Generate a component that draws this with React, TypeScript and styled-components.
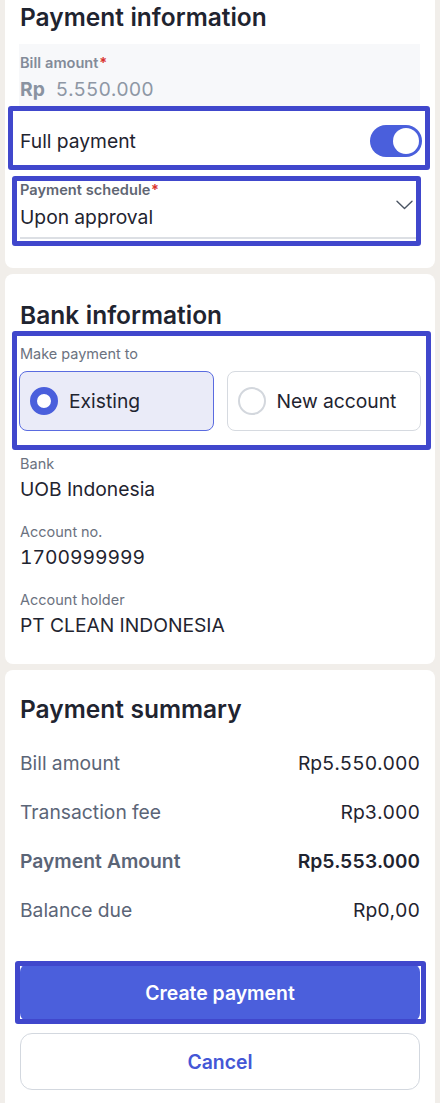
import React from "react";
import styled, { createGlobalStyle } from "styled-components";

const GlobalStyle = createGlobalStyle`
  html, body {
    margin: 0;
    padding: 0;
    background: #f1eeea;
  }
  body {
    font-family: Inter, "Noto Sans", "Liberation Sans", sans-serif;
    font-feature-settings: "tnum" 1;
    color: #1f2430;
    -webkit-font-smoothing: antialiased;
  }
  * { box-sizing: border-box; }
`;

const Page = styled.div`
  display: flex;
  flex-direction: column;
  gap: 6px;
  padding: 0 5px;
  width: 440px;
  height: 1103px;
  overflow: hidden;
`;

const Card = styled.section<{ $pt: number; $pb: number; $first?: boolean }>`
  background: #ffffff;
  border-radius: ${(p) => (p.$first ? "0 0 8px 8px" : "8px")};
  padding: ${(p) => `${p.$pt}px 15px ${p.$pb}px`};
  display: flex;
  flex-direction: column;
  flex-shrink: 0;
`;

const Title = styled.h2`
  margin: 0;
  font-size: 24.5px;
  line-height: 28px;
  font-weight: 600;
  color: #1f2430;
  white-space: nowrap;
`;

const Annotated = styled.div`
  position: relative;
`;

const Mark = styled.div<{ $t: number; $r: number; $b: number; $l: number }>`
  position: absolute;
  top: ${(p) => p.$t}px;
  right: ${(p) => p.$r}px;
  bottom: ${(p) => p.$b}px;
  left: ${(p) => p.$l}px;
  border: 5px solid #4047cc;
  border-radius: 3px;
  pointer-events: none;
  z-index: 2;
`;

const ReadonlyField = styled.div`
  margin-top: 13px;
  margin-left: -1px;
  background: #f7f8fa;
  padding: 11px 0 0 1px;
  display: flex;
  flex-direction: column;
  gap: 5px;
  height: 64px;
`;

const FieldLabel = styled.div<{ $muted?: boolean }>`
  font-size: 14.6px;
  line-height: 16px;
  font-weight: 600;
  color: ${(p) => (p.$muted ? "#838b99" : "#5f6673")};
`;

const Req = styled.span`
  color: #d9302c;
`;

const AmountLine = styled.div`
  display: flex;
  align-items: baseline;
  gap: 11px;
  font-size: 19.3px;
  line-height: 26px;
  color: #8e97a5;
`;

const Currency = styled.span`
  font-weight: 700;
  color: #8a93a1;
`;

const ToggleRow = styled.div`
  height: 62px;
  display: flex;
  align-items: center;
  justify-content: space-between;
  padding-top: 4px;
`;

const BodyText = styled.span`
  font-size: 19.3px;
  line-height: 24px;
  color: #1f2430;
  white-space: nowrap;
`;

const Switch = styled.div<{ $on: boolean }>`
  width: 52px;
  height: 32px;
  border-radius: 16px;
  background: ${(p) => (p.$on ? "#4a5fdc" : "#d1d5db")};
  display: flex;
  align-items: center;
  justify-content: ${(p) => (p.$on ? "flex-end" : "flex-start")};
  padding: 0 3px;
  margin-right: -2px;
`;

const Knob = styled.div`
  width: 26px;
  height: 26px;
  border-radius: 50%;
  background: #ffffff;
`;

const SelectField = styled.div`
  margin-top: 12px;
  display: flex;
  align-items: flex-start;
  justify-content: space-between;
  border-bottom: 2px solid #dcdfe4;
  padding-bottom: 8px;
`;

const SelectText = styled.div`
  display: flex;
  flex-direction: column;
  gap: 7px;
`;

const Chevron = styled.svg`
  margin-top: 18px;
  margin-right: 7px;
  flex-shrink: 0;
`;

const SubLabel = styled.div`
  font-size: 14.5px;
  line-height: 20px;
  color: #6b7280;
`;

const RadioBlock = styled.div`
  margin-top: 15px;
  display: flex;
  flex-direction: column;
  gap: 7px;
`;

const RadioGroup = styled.div`
  display: grid;
  grid-template-columns: 1fr 1fr;
  gap: 13px;
  margin: 0 -1px;
`;

const RadioCard = styled.div<{ $selected: boolean }>`
  height: 60px;
  border-radius: 8px;
  border: 1px solid ${(p) => (p.$selected ? "#5a6be0" : "#d6dae0")};
  background: ${(p) => (p.$selected ? "#eaebf8" : "#ffffff")};
  display: flex;
  align-items: center;
  gap: 11px;
  padding-left: 10px;
`;

const RadioDot = styled.div<{ $selected: boolean }>`
  width: 28px;
  height: 28px;
  border-radius: 50%;
  background: #ffffff;
  border: ${(p) => (p.$selected ? "7px solid #4a5fdc" : "2px solid #d3d7dd")};
  flex-shrink: 0;
`;

const InfoList = styled.div`
  margin-top: 23px;
  display: flex;
  flex-direction: column;
  gap: 21px;
`;

const InfoItem = styled.div`
  display: flex;
  flex-direction: column;
  gap: 3px;
`;

const SummaryList = styled.div`
  margin-top: 28px;
  display: flex;
  flex-direction: column;
  gap: 25px;
`;

const SummaryRow = styled.div<{ $strong?: boolean }>`
  display: flex;
  justify-content: space-between;
  font-size: 19.3px;
  line-height: 24px;
  font-weight: ${(p) => (p.$strong ? 600 : 400)};
`;

const SummaryLabel = styled.span`
  color: #5b6577;
`;

const SummaryValue = styled.span`
  color: #1f2430;
`;

const Actions = styled.div`
  margin-top: 42px;
  display: flex;
  flex-direction: column;
  gap: 12px;
`;

const Button = styled.button<{ $primary?: boolean }>`
  width: 100%;
  height: 57px;
  border-radius: ${(p) => (p.$primary ? "8px" : "12px")};
  border: ${(p) => (p.$primary ? "none" : "1px solid #d3d8df")};
  background: ${(p) => (p.$primary ? "#4b5fdc" : "#ffffff")};
  color: ${(p) => (p.$primary ? "#ffffff" : "#4457d6")};
  font-family: inherit;
  font-size: 19.4px;
  font-weight: 600;
  display: flex;
  align-items: center;
  justify-content: center;
  padding: 0;
`;

export default function App() {
  return (
    <>
      <GlobalStyle />
      <Page>
        <Card $pt={3} $pb={29} $first>
          <Title>Payment information</Title>
          <ReadonlyField>
            <FieldLabel $muted>
              Bill amount<Req>*</Req>
            </FieldLabel>
            <AmountLine>
              <Currency>Rp</Currency>
              <span>5.550.000</span>
            </AmountLine>
          </ReadonlyField>
          <Annotated>
            <Mark $t={-2} $r={-10} $b={0} $l={-12} />
            <ToggleRow>
              <BodyText>Full payment</BodyText>
              <Switch $on>
                <Knob />
              </Switch>
            </ToggleRow>
          </Annotated>
          <Annotated>
            <Mark $t={6} $r={-1} $b={-7} $l={-8} />
            <SelectField>
              <SelectText>
                <FieldLabel>
                  Payment schedule<Req>*</Req>
                </FieldLabel>
                <BodyText>Upon approval</BodyText>
              </SelectText>
              <Chevron width="17" height="10" viewBox="0 0 17 10" fill="none">
                <path d="M1 1.2 L8.5 8.4 L16 1.2" stroke="#4b5563" strokeWidth="1.4" strokeLinecap="round" strokeLinejoin="round" />
              </Chevron>
            </SelectField>
          </Annotated>
        </Card>

        <Card $pt={27} $pb={27}>
          <Title>Bank information</Title>
          <Annotated>
            <Mark $t={2} $r={-11} $b={-19} $l={-8} />
            <RadioBlock>
              <SubLabel>Make payment to</SubLabel>
              <RadioGroup>
                <RadioCard $selected>
                  <RadioDot $selected />
                  <BodyText>Existing</BodyText>
                </RadioCard>
                <RadioCard $selected={false}>
                  <RadioDot $selected={false} />
                  <BodyText>New account</BodyText>
                </RadioCard>
              </RadioGroup>
            </RadioBlock>
          </Annotated>
          <InfoList>
            <InfoItem>
              <SubLabel>Bank</SubLabel>
              <BodyText>UOB Indonesia</BodyText>
            </InfoItem>
            <InfoItem>
              <SubLabel>Account no.</SubLabel>
              <BodyText>1700999999</BodyText>
            </InfoItem>
            <InfoItem>
              <SubLabel>Account holder</SubLabel>
              <BodyText>PT CLEAN INDONESIA</BodyText>
            </InfoItem>
          </InfoList>
        </Card>

        <Card $pt={25} $pb={24}>
          <Title>Payment summary</Title>
          <SummaryList>
            <SummaryRow>
              <SummaryLabel>Bill amount</SummaryLabel>
              <SummaryValue>Rp5.550.000</SummaryValue>
            </SummaryRow>
            <SummaryRow>
              <SummaryLabel>Transaction fee</SummaryLabel>
              <SummaryValue>Rp3.000</SummaryValue>
            </SummaryRow>
            <SummaryRow $strong>
              <SummaryLabel>Payment Amount</SummaryLabel>
              <SummaryValue>Rp5.553.000</SummaryValue>
            </SummaryRow>
            <SummaryRow>
              <SummaryLabel>Balance due</SummaryLabel>
              <SummaryValue>Rp0,00</SummaryValue>
            </SummaryRow>
          </SummaryList>
          <Actions>
            <Annotated>
              <Mark $t={-3} $r={-6} $b={-3} $l={-5} />
              <Button $primary>Create payment</Button>
            </Annotated>
            <Button>Cancel</Button>
          </Actions>
        </Card>
      </Page>
    </>
  );
}
